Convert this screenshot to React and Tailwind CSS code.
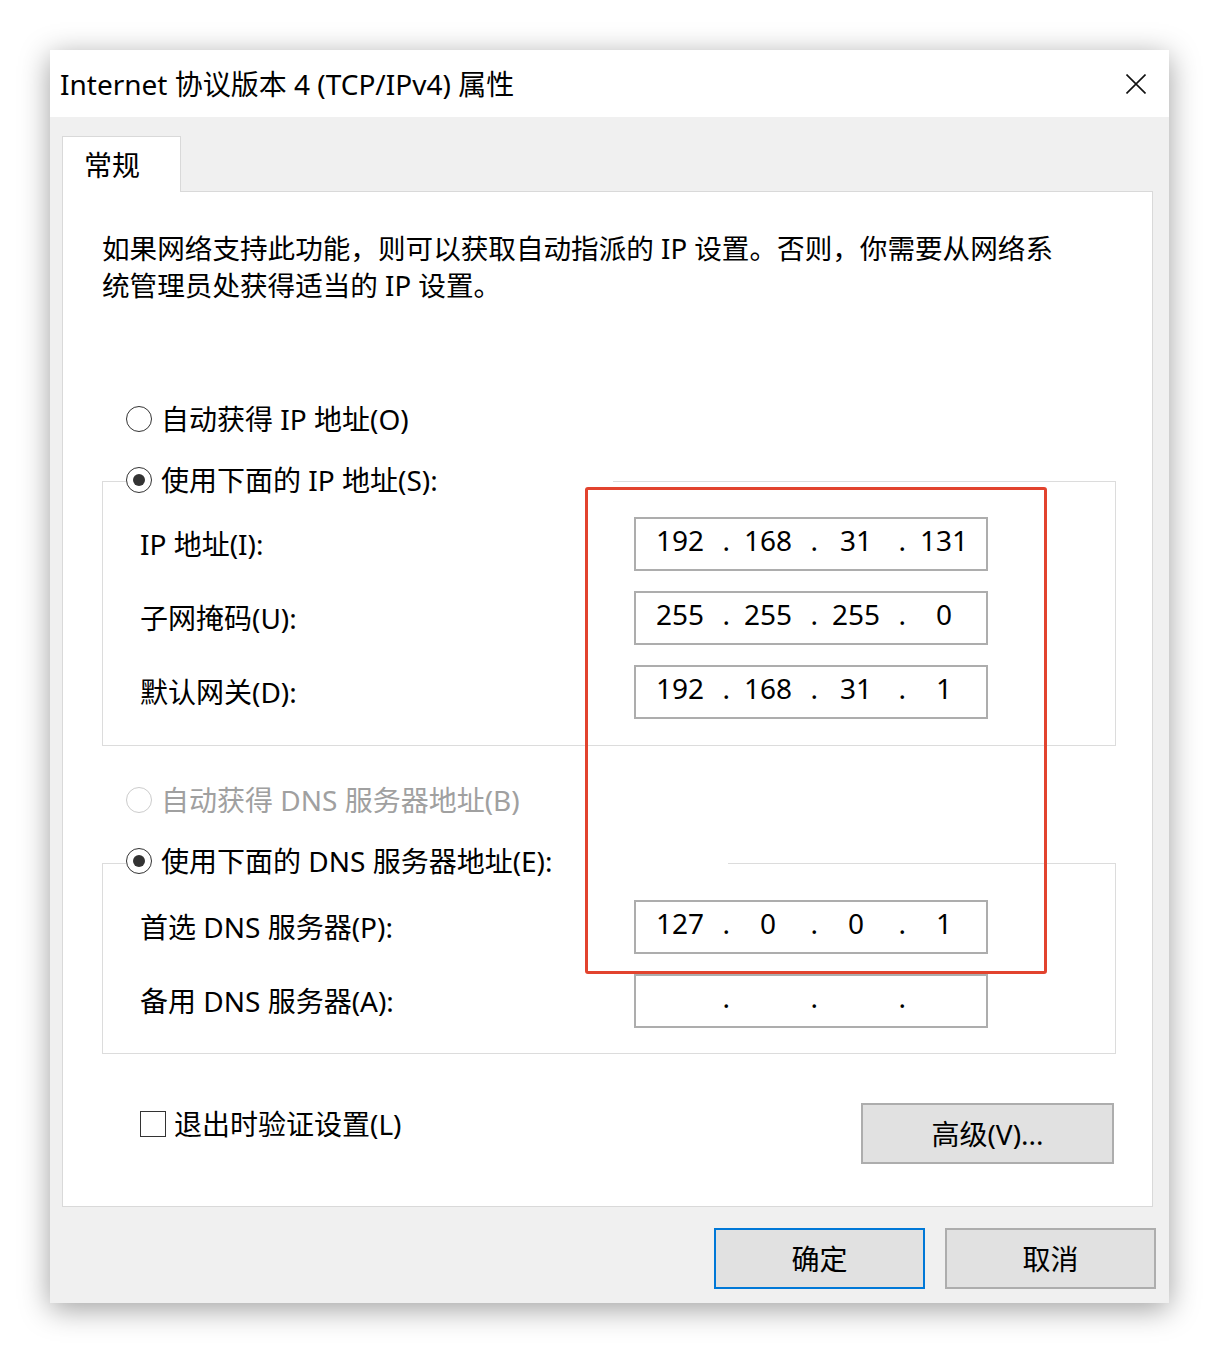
import React from "react";

function Radio({ checked, disabled }) {
  return (
    <span
      className={`w-[26px] h-[26px] shrink-0 rounded-full border bg-white flex items-center justify-center ${
        disabled ? "border-[#cccccc]" : "border-[#333333]"
      }`}
    >
      {checked && <span className="w-[12px] h-[12px] rounded-full bg-[#333333]" />}
    </span>
  );
}

function RadioRow({ checked, disabled, label, extra = "" }) {
  return (
    <div className={`h-[30px] flex items-center gap-[9px] ${extra}`}>
      <Radio checked={checked} disabled={disabled} />
      <span className={disabled ? "text-[#a0a0a0]" : "text-black"}>{label}</span>
    </div>
  );
}

function IPBox({ parts }) {
  const vals = parts || ["", "", "", ""];
  return (
    <div className="w-[354px] h-[54px] border-2 border-[#adadad] bg-white flex items-center pl-[6px] pb-[9px]">
      {vals.map((v, i) => (
        <React.Fragment key={i}>
          <span className="w-[76px] text-center leading-[30px]">{v}</span>
          {i < 3 && <span className="w-[12px] text-right leading-[30px]">.</span>}
        </React.Fragment>
      ))}
    </div>
  );
}

function Row({ label, parts }) {
  return (
    <div className="h-[54px] flex items-center">
      <span className="w-[494px] shrink-0">{label}</span>
      <IPBox parts={parts} />
    </div>
  );
}

function Group({ legend, legendWidth, children, pt, pb }) {
  return (
    <fieldset className="border border-[#dcdcdc] p-0 m-0 min-w-0">
      <legend className={`ml-[23px] p-0 ${legendWidth}`}>{legend}</legend>
      <div className={`pl-[37px] flex flex-col gap-[20px] ${pt} ${pb}`}>{children}</div>
    </fieldset>
  );
}

export default function App() {
  return (
    <div className="min-h-[1353px] bg-white pt-[50px] pl-[50px] font-['Noto_Sans','Noto_Sans_CJK_SC',sans-serif] text-[28px] text-black">
      <div className="relative w-[1119px] h-[1253px] shadow-[0_6px_28px_rgba(0,0,0,0.38)] flex flex-col">
        {/* title bar */}
        <div className="h-[67px] bg-white flex items-center justify-between pl-[10px] pr-[23px]">
          <span className="text-[28px]">Internet 协议版本 4 (TCP/IPv4) 属性</span>
          <svg width="20" height="20" viewBox="0 0 20 20" className="shrink-0">
            <path d="M0.5 0.5 L19.5 19.5 M19.5 0.5 L0.5 19.5" stroke="#111" strokeWidth="1.6" fill="none" />
          </svg>
        </div>

        {/* body */}
        <div className="flex-1 bg-[#f0f0f0] pt-[19px] pl-[12px] pr-[16px] pb-[14px] flex flex-col">
          <div className="relative z-10 -mb-px w-[119px] h-[56px] bg-white border-t border-l border-r border-[#d9d9d9] flex items-center pl-[21px]">
            常规
          </div>
          <div className="bg-white border border-[#d9d9d9] pt-[38px] pl-[39px] pr-[36px] pb-[42px] flex flex-col">
            <p className="leading-[37px] w-[970px] text-[27.6px]">
              如果网络支持此功能，则可以获取自动指派的 IP 设置。否则，你需要从网络系统管理员处获得适当的 IP 设置。
            </p>

            <div className="mt-[100px] ml-[24px]">
              <RadioRow label="自动获得 IP 地址(O)" />
            </div>

            <div className="mt-[32px]">
              <Group
                legendWidth="w-[487px]"
                legend={
                  <div className="h-[30px] pb-[3px] flex items-center">
                    <RadioRow checked label="使用下面的 IP 地址(S):" extra="h-[27px]" />
                  </div>
                }
                pt="pt-[21px]"
                pb="pb-[26px]"
              >
                <Row label="IP 地址(I):" parts={["192", "168", "31", "131"]} />
                <Row label="子网掩码(U):" parts={["255", "255", "255", "0"]} />
                <Row label="默认网关(D):" parts={["192", "168", "31", "1"]} />
              </Group>
            </div>

            <div className="mt-[39px] ml-[24px]">
              <RadioRow disabled label="自动获得 DNS 服务器地址(B)" />
            </div>

            <div className="mt-[33px]">
              <Group
                legendWidth="w-[602px]"
                legend={
                  <div className="h-[30px] pb-[5px] flex items-center">
                    <RadioRow checked label="使用下面的 DNS 服务器地址(E):" extra="h-[25px]" />
                  </div>
                }
                pt="pt-[22px]"
                pb="pb-[25px]"
              >
                <Row label="首选 DNS 服务器(P):" parts={["127", "0", "0", "1"]} />
                <Row label="备用 DNS 服务器(A):" />
              </Group>
            </div>

            <div className="mt-[49px] flex items-start justify-between pl-[38px] pr-[2px]">
              <div className="mt-[6px] h-[30px] flex items-center gap-[8px]">
                <span className="w-[26px] h-[26px] border border-[#333333] bg-white" />
                <span>退出时验证设置(L)</span>
              </div>
              <button className="w-[253px] h-[61px] bg-[#e1e1e1] border-2 border-[#adadad] flex items-center justify-center">
                高级(V)...
              </button>
            </div>
          </div>

          <div className="mt-[21px] flex justify-end gap-[20px]">
            <button className="w-[211px] h-[61px] bg-[#e1e1e1] border-2 border-[#0078d7] flex items-center justify-center">
              确定
            </button>
            <button className="w-[211px] h-[61px] bg-[#e1e1e1] border-2 border-[#adadad] flex items-center justify-center -mr-[3px]">
              取消
            </button>
          </div>
        </div>

        {/* annotation */}
        <div className="absolute left-[535px] top-[437px] w-[462px] h-[487px] border-[3px] border-[#e2432e] rounded-[3px] pointer-events-none" />
      </div>
    </div>
  );
}
